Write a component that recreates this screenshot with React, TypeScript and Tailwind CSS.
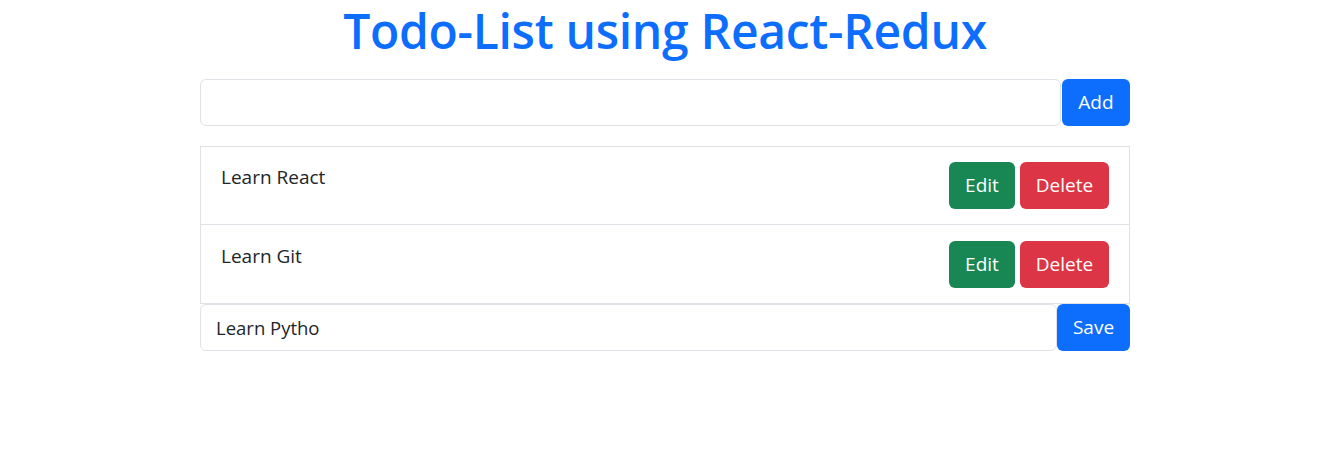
import { useState } from 'react';

const todos = [
  { id: 1, text: 'Learn React' },
  { id: 2, text: 'Learn Git' },
];

const App = () => {
  const [draft, setDraft] = useState('');
  const [editText, setEditText] = useState('Learn Pytho');

  return (
    <div className="min-h-screen bg-white pr-[10px] text-[#212529] font-['Open_Sans',sans-serif]">
      <div className="mx-auto w-[930px] pt-[2px]">
        {/* Title */}
        <h1 className="text-center text-[48px] font-semibold leading-[58px] tracking-[-0.3px] text-[#0d6efd]">
          Todo-List using React-Redux
        </h1>

        {/* Add form */}
        <div className="mt-[19px] flex items-stretch">
          <input
            value={draft}
            onChange={(e) => setDraft(e.target.value)}
            className="h-[47px] flex-1 rounded-[6px] border border-[#dee2e6] px-4 text-[18px] outline-none"
          />
          <button className="ml-px h-[47px] w-[68px] rounded-[6px] bg-[#0d6efd] text-[19px] text-white">
            Add
          </button>
        </div>

        {/* Todo list */}
        <ul className="mt-[20px]">
          {todos.map((todo) => (
            <li
              key={todo.id}
              className="flex h-[79px] items-start justify-between border border-t-0 border-[#dee2e6] pl-5 pr-5 pt-4 first:border-t first:pt-[15px]"
            >
              <span className="pt-[2px] text-[19px] leading-[26px]">{todo.text}</span>
              <div className="flex gap-[5px]">
                <button className="h-[47px] w-[66px] rounded-[6px] bg-[#198754] text-[19px] text-white">
                  Edit
                </button>
                <button className="h-[47px] w-[89px] rounded-[6px] bg-[#dc3545] text-[19px] text-white">
                  Delete
                </button>
              </div>
            </li>
          ))}
        </ul>

        {/* Edit form */}
        <div className="flex items-stretch">
          <input
            value={editText}
            onChange={(e) => setEditText(e.target.value)}
            className="h-[47px] flex-1 rounded-[6px] border border-[#dee2e6] px-[15px] text-[18.5px] text-[#212529] outline-none"
          />
          <button className="h-[47px] w-[73px] rounded-[6px] bg-[#0d6efd] text-[19px] text-white">
            Save
          </button>
        </div>
      </div>
    </div>
  );
};

export default App;
